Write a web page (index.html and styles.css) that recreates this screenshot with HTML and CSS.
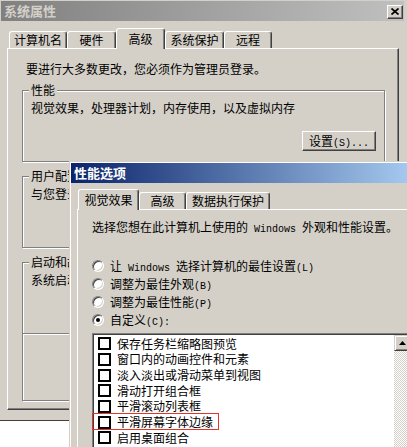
FILE: index.html
```html
<!DOCTYPE html>
<html lang="zh-CN">
<head>
    <meta charset="UTF-8">
    <title>系统属性</title>
    <link rel="stylesheet" href="styles.css">
</head>
<body>
    <div class="sys">
        <div class="title title-off">
            <span class="title-text">系统属性</span>
            <span class="close">
                <svg width="8" height="7" viewBox="0 0 8 7"><path d="M0.5 0.5L7.5 6.5M7.5 0.5L0.5 6.5" stroke="#000" stroke-width="1.7"/></svg>
            </span>
        </div>
        <div class="tabs">
            <div class="tab w58">计算机名</div>
            <div class="tab w49">硬件</div>
            <div class="tab w49 on">高级</div>
            <div class="tab w59">系统保护</div>
            <div class="tab w48">远程</div>
        </div>
        <div class="page">
            <p class="note">要进行大多数更改，您必须作为管理员登录。</p>
            <div class="group">
                <span class="legend">性能</span>
                <p class="desc">视觉效果，处理器计划，内存使用，以及虚拟内存</p>
                <button class="btn">设置<span class="en">(S)...</span></button>
            </div>
            <div class="group">
                <span class="legend">用户配置文件</span>
                <p class="desc">与您登录有关的桌面设置</p>
                <button class="btn">设置<span class="en">(E)...</span></button>
            </div>
            <div class="group">
                <span class="legend">启动和故障恢复</span>
                <p class="desc">系统启动、系统失败和调试信息</p>
                <button class="btn">设置<span class="en">(T)...</span></button>
            </div>
            <div class="group tail"></div>
        </div>
    </div>

    <div class="perf">
        <div class="title title-on">
            <span class="title-text">性能选项</span>
        </div>
        <div class="tabs">
            <div class="tab w61 on">视觉效果</div>
            <div class="tab w47">高级</div>
            <div class="tab w84">数据执行保护</div>
        </div>
        <div class="page">
            <p class="pick">选择您想在此计算机上使用的<span class="en"> Windows </span>外观和性能设置。</p>
            <div class="radios">
                <div class="opt"><span class="radio"></span><span>让<span class="en"> Windows </span>选择计算机的最佳设置<span class="en">(L)</span></span></div>
                <div class="opt"><span class="radio"></span><span>调整为最佳外观<span class="en">(B)</span></span></div>
                <div class="opt"><span class="radio"></span><span>调整为最佳性能<span class="en">(P)</span></span></div>
                <div class="opt"><span class="radio on"></span><span>自定义<span class="en">(C):</span></span></div>
            </div>
            <div class="list">
                <div class="items">
                    <div class="row"><span class="check"></span>保存任务栏缩略图预览</div>
                    <div class="row"><span class="check"></span>窗口内的动画控件和元素</div>
                    <div class="row"><span class="check"></span>淡入淡出或滑动菜单到视图</div>
                    <div class="row"><span class="check"></span>滑动打开组合框</div>
                    <div class="row"><span class="check"></span>平滑滚动列表框</div>
                    <div class="row marked"><span class="check"></span>平滑屏幕字体边缘</div>
                    <div class="row"><span class="check"></span>启用桌面组合</div>
                </div>
                <div class="scroll">
                    <div class="up">
                        <svg width="7" height="4" viewBox="0 0 7 4"><path d="M3.5 0L7 4H0Z" fill="#000"/></svg>
                    </div>
                </div>
            </div>
        </div>
    </div>
</body>
</html>
```

FILE: styles.css
```css
body {
    margin: 0;
    width: 407px;
    height: 447px;
    overflow: hidden;
    position: relative;
    background: #fff;
    font-family: "Noto Sans CJK SC", sans-serif;
    font-size: 12px;
    line-height: 14px;
    color: #000;
}

p {
    margin: 0;
}

.en {
    font-family: "Liberation Mono", monospace;
    font-size: 10px;
    line-height: 10px;
}

/* main window */
.sys {
    box-sizing: border-box;
    width: 407px;
    height: 421px;
    padding: 1px 3px 0 1px;
    background: #d4d0c8;
    border-bottom: 1px solid #404040;
}

.title {
    height: 20px;
    display: flex;
    align-items: center;
    justify-content: space-between;
    padding: 0 1px 0 3px;
}

.title-off {
    background: linear-gradient(90deg, #808080, #c0c0c0);
}

.title-on {
    background: linear-gradient(90deg, #0a246a, #a6caf0);
}

.title-text {
    font-weight: bold;
    font-size: 13px;
    color: #d4d0c8;
}

.title-on .title-text {
    color: #fff;
}

.close {
    box-sizing: border-box;
    width: 16px;
    height: 14px;
    margin-top: 1px;
    display: flex;
    align-items: center;
    justify-content: center;
    background: #d4d0c8;
    border: 1px solid;
    border-color: #fff #404040 #404040 #fff;
    box-shadow: inset -1px -1px #808080;
}

/* tabs */
.tabs {
    display: flex;
    align-items: flex-end;
    height: 20px;
    padding: 7px 0 0 8px;
}

.tab {
    box-sizing: border-box;
    height: 17px;
    display: flex;
    align-items: center;
    justify-content: center;
    background: #d4d0c8;
    border: 1px solid;
    border-bottom: 0;
    border-color: #fff #404040 #fff #fff;
    border-radius: 3px 3px 0 0;
    box-shadow: inset -1px 0 #808080;
}

.tab.on {
    height: 21px;
    margin-bottom: -1px;
    position: relative;
    z-index: 1;
}

.w47 { width: 47px; }
.w48 { width: 48px; }
.w49 { width: 49px; }
.w58 { width: 58px; }
.w59 { width: 59px; }
.w61 { width: 61px; }
.w84 { width: 84px; }

.page {
    box-sizing: border-box;
    width: 392px;
    height: 362px;
    margin-left: 6px;
    border: 1px solid;
    border-color: #fff #404040 #404040 #fff;
    box-shadow: inset -1px -1px #808080;
}

.note {
    margin: 13px 0 0 18px;
}

.group {
    box-sizing: border-box;
    width: 363px;
    height: 72px;
    margin: 14px 0 0 14px;
    display: flex;
    flex-direction: column;
    align-items: flex-start;
    border: 1px solid #808080;
    box-shadow: inset 1px 1px #fff, 1px 1px #fff;
}

.group.tail {
    height: 68px;
    margin-top: -1px;
}

.legend {
    margin: -8px 0 0 6px;
    padding: 0 2px;
    background: #d4d0c8;
}

.desc {
    margin: 4px 0 0 8px;
}

.btn {
    align-self: flex-end;
    box-sizing: border-box;
    width: 74px;
    height: 20px;
    margin: 16px 8px 0 0;
    padding: 0;
    font: inherit;
    color: #000;
    background: #d4d0c8;
    border: 1px solid;
    border-color: #fff #404040 #404040 #fff;
    box-shadow: inset -1px -1px #808080;
}

/* performance options dialog */
.perf {
    position: absolute;
    left: 69px;
    top: 161px;
    box-sizing: border-box;
    width: 345px;
    height: 290px;
    padding: 1px;
    background: #d4d0c8;
    border: 1px solid;
    border-color: #d4d0c8 #404040 #404040 #d4d0c8;
    box-shadow: inset 1px 1px #fff, inset -1px -1px #808080;
}

.perf .tabs {
    padding: 6px 0 0 7px;
}

.perf .page {
    width: 340px;
    height: 260px;
}

.pick {
    margin: 10px 0 0 14px;
    white-space: nowrap;
}

.radios {
    margin: 22px 0 0 14px;
}

.opt {
    height: 18px;
    display: flex;
    align-items: center;
    white-space: nowrap;
}

.radio {
    box-sizing: border-box;
    width: 12px;
    height: 12px;
    margin-right: 6px;
    flex: none;
    position: relative;
    border-radius: 50%;
    background: #fff;
    border: 1px solid;
    border-color: #808080 #fff #fff #808080;
    box-shadow: inset 1px 1px #404040, inset -1px -1px #d4d0c8;
}

.radio.on::after {
    content: "";
    position: absolute;
    left: 3px;
    top: 3px;
    width: 4px;
    height: 4px;
    border-radius: 50%;
    background: #000;
}

.list {
    box-sizing: border-box;
    width: 320px;
    height: 130px;
    margin: 4px 0 0 14px;
    display: flex;
    background: #fff;
    border: 1px solid;
    border-color: #808080 #fff #fff #808080;
    box-shadow: inset 1px 1px #404040;
    padding: 1px 1px 0 1px;
}

.items {
    flex: 1;
    padding-top: 1px;
}

.row {
    height: 15.67px;
    display: flex;
    align-items: center;
    padding-left: 4px;
    position: relative;
    white-space: nowrap;
}

.check {
    width: 9px;
    height: 9px;
    margin-right: 6px;
    flex: none;
    border: 2px solid #000;
    background: #fff;
}

.row.marked::after {
    content: "";
    position: absolute;
    left: -2px;
    top: -1px;
    box-sizing: border-box;
    width: 127px;
    height: 17px;
    border: 1px solid #e5332a;
}

.scroll {
    width: 16px;
    flex: none;
    background: repeating-conic-gradient(#d4d0c8 0 25%, #fff 0 50%) 0 0 / 2px 2px;
}

.up {
    box-sizing: border-box;
    height: 16px;
    display: flex;
    align-items: center;
    justify-content: center;
    background: #d4d0c8;
    border: 1px solid;
    border-color: #d4d0c8 #404040 #404040 #d4d0c8;
    box-shadow: inset 1px 1px #fff, inset -1px -1px #808080;
}
```
